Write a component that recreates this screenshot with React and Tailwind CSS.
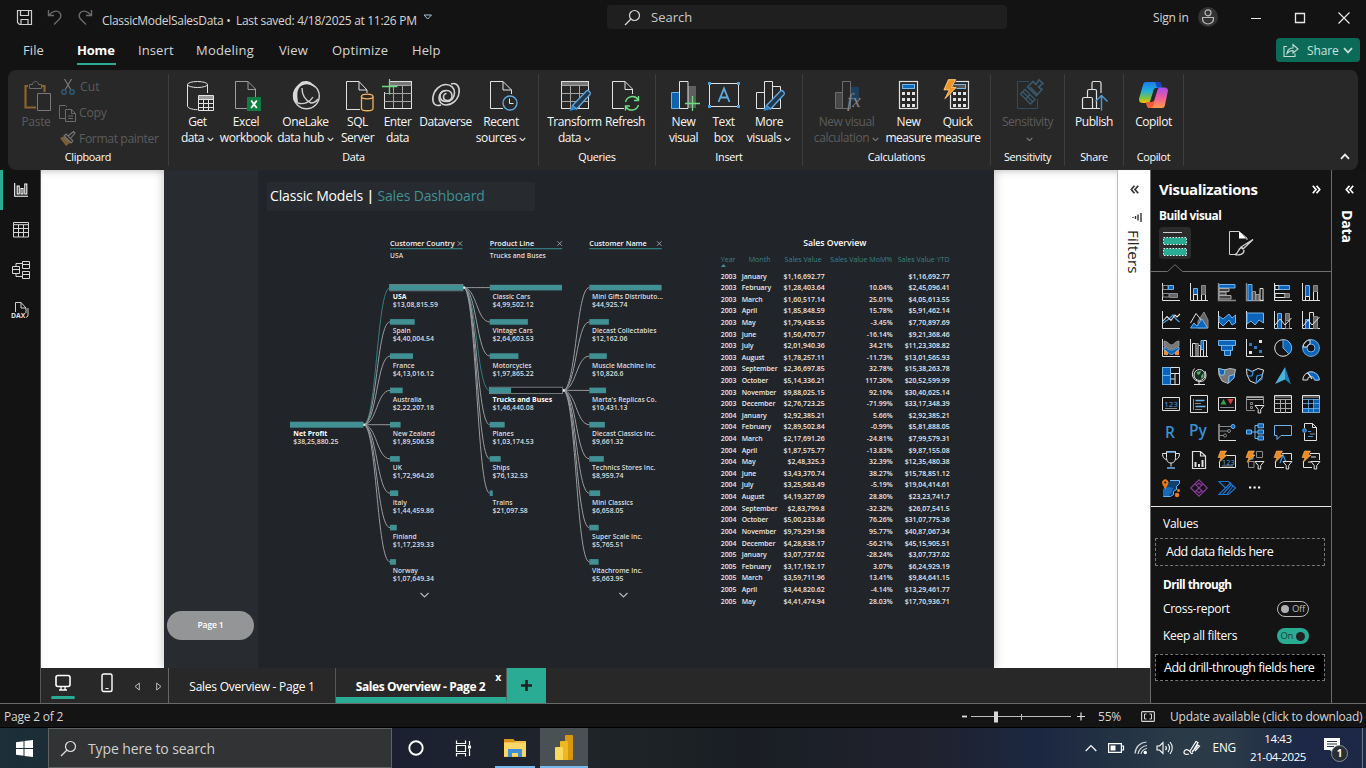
import React from "react";

const W = "#e2e2e2";
const G = "#8a8a8a";
const B = "#0b64b8";
const L = "#6db3ec";
const TEAL = "#2aac94";
const BAR = "#419094";

function Svg({ w = 32, h = w, children, className = "" }) {
  return (
    <svg width={w} height={h} viewBox={`0 0 ${w} ${h}`} fill="none" className={`shrink-0 overflow-visible ${className}`}>
      {children}
    </svg>
  );
}

function Chevron({ color = "#d8d8d8", w = 7, className = "" }) {
  return (
    <svg width={w} height={w * 0.7} viewBox="0 0 10 7" fill="none" className={`inline-block shrink-0 ${className}`}>
      <path d="M1 1.2L5 5.4L9 1.2" stroke={color} strokeWidth="1.7" />
    </svg>
  );
}

/* ---------- ribbon icons, 32 x 32 ---------- */
const GetDataIcon = () => (
  <Svg>
    <path d="M5.500 5.500V27c0 2 4 3.500 10 3.700M25.500 5.500V14" stroke={W} />
    <ellipse cx="15.500" cy="5.500" rx="10" ry="3" stroke={W} />
    <path d="M16.500 16.500h15v15h-15zM16.500 20.500h15M16.500 24.500h15M16.500 28.500h15M21.500 18v13M26.500 18v13" stroke={W} />
    <path d="M17 17h14v3h-14z" fill="#9a9a9a" />
  </Svg>
);
const ExcelIcon = () => (
  <Svg>
    <path d="M17 29.500H5.500V2.500H18L25.500 10V18M18 2.500V10.500H25.500" stroke="#9c9c9c" />
    <path d="M17 18h14v14h-14z" fill="#107c41" />
    <path d="M21.200 21.500L26.800 29M26.800 21.500L21.200 29" stroke="#fff" strokeWidth="1.800" />
  </Svg>
);
const OneLakeIcon = () => (
  <Svg>
    <circle cx="16.500" cy="17" r="12.800" stroke="#d0d0d0" strokeWidth="1.400" />
    <path d="M12 2.500C4 8 1 15 4 22l4 3c0-6-2-11 1-16 4-5 11-5 16 0C22 2 17 1 12 2.500Z" fill="#d8d8d8" />
    <path d="M8 24c6 2 12-1 15-6M12 9c0 7 3 12 9 15 3 0 5-1 7-4" stroke="#d0d0d0" strokeWidth="1.400" />
  </Svg>
);
const SqlIcon = () => (
  <Svg>
    <path d="M18 30.500H4.500V2.500H17L25 11V14M17 2.500V11H25" stroke={W} />
    <path d="M19.500 17.500V29.500c0 3 11.500 3 11.500 0V17.500" stroke="#f2b35e" strokeWidth="1.300" />
    <ellipse cx="25.200" cy="17.500" rx="5.800" ry="2.300" stroke="#f2b35e" strokeWidth="1.300" />
  </Svg>
);
const TableGrid = ({ x = 2.5 }) => (
  <g>
    <rect x={x} y="2.500" width="27" height="27" stroke={W} />
    <rect x={x + 0.5} y="3" width="26" height="3" fill="#777" />
    <path d={`M${x} 6.500h27M${x} 14.500h27M${x} 22.500h27M${x + 9} 7v22M${x + 18} 7v22`} stroke="#a5a5a5" />
  </g>
);
const EnterIcon = () => (
  <Svg>
    <TableGrid x={2.5} />
    <rect x="0" y="0" width="8" height="13" fill="#282828" />
    <path d="M0 7.500H15.500M7.500 0V15.500" stroke="#6fdc83" strokeWidth="1.300" />
  </Svg>
);
const DataverseIcon = () => (
  <Svg>
    <path d="M21 5c6-2 9 3 8 9-1 7-7 12-13 12-4 0-7-3-7-7s3-7.500 7.500-7.500c4 0 5.500 3 5.500 5.500s-2 4.500-4.500 4.500-4-1.500-4-3.500 1.500-3.500 3-3.500" stroke="#d4d4d4" strokeWidth="1.600" />
    <path d="M11 26c-6 2-9-2-8-8 1-7 7-12.500 13-12.500 5 0 8.500 3.500 8.500 8 0 5-3 9-8 9-4 0-6.500-2-6.500-5.500 0-3 2.500-5.500 5.500-5.500" stroke="#d4d4d4" strokeWidth="1.600" />
  </Svg>
);
const RecentIcon = () => (
  <Svg>
    <path d="M18 29.500H5.500V2.500H18L26.500 11V15M18 2.500V11H26.500" stroke={W} />
    <circle cx="25" cy="24" r="7" fill="#282828" stroke="#5da9e0" strokeWidth="1.400" />
    <path d="M24.500 19.500V24.500H28.500" stroke={W} />
  </Svg>
);
const Pencil = () => (
  <g>
    <path d="M13.500 26.500L27.500 12C29 10.500 32.500 13.500 31 15.500L17.500 30Z" fill="#23384a" stroke="#5da9e0" strokeWidth="1.300" />
    <path d="M10.500 32L12.800 26.300L17.300 30.300Z" fill="#2f86cc" />
  </g>
);
const TransformIcon = () => (<Svg><TableGrid x={2.5} /><Pencil /></Svg>);
const RefreshIcon = () => (
  <Svg>
    <path d="M15 29.500H3.500V2.500H16L23.500 10V15M16 2.500V10.500H23.500" stroke={W} />
    <path d="M16.500 23a7 7 0 0 1 12.500-2.500M29.500 26a7 7 0 0 1-12.500 2M29.500 17v4.500h-4.500M16.500 31.500V27h4.500" stroke="#6fdc83" strokeWidth="1.400" />
  </Svg>
);
const NewVisualIcon = () => (
  <Svg>
    <path d="M3.500 13.500h9v16h-9z" fill="#0f62ae" stroke="#6db3ec" />
    <path d="M20 7h8v22h-8z" fill="#5e5e5e" />
    <path d="M11.500 2.500h8.500v27h-8.500z" fill="#282828" stroke={W} />
    <path d="M17 24.500H32M24.500 17V32" stroke="#6fdc83" strokeWidth="1.300" />
  </Svg>
);
const TextBoxIcon = () => (
  <Svg>
    <rect x="1.500" y="4.500" width="29" height="23" stroke={W} />
    <path d="M0 3h3v3H0zM29 3h3v3h-3zM0 26h3v3H0zM29 26h3v3h-3z" fill="#4aa0e6" />
    <path d="M10.500 23L16 9.500L21.500 23M12.500 18.500h7" stroke="#5da9e0" strokeWidth="1.800" />
  </Svg>
);
const MoreVisualsIcon = () => (
  <Svg>
    <path d="M3.500 13.500h8v16h-8zM11.500 2.500h8v27h-8zM19.500 7.500h8v22h-8z" stroke={W} />
    <Pencil />
  </Svg>
);
const NewCalcIcon = () => (
  <Svg>
    <path d="M4.500 13.500h9v16h-9z" fill="#474747" stroke="#6c6c6c" />
    <path d="M19 8h9v14h-9z" fill="#1d405e" />
    <path d="M11.500 2.500h8v27h-8z" fill="#282828" stroke="#6c6c6c" />
    <text x="16" y="28" fontFamily="Liberation Serif" fontStyle="italic" fontSize="19" fill="#858585">fx</text>
  </Svg>
);
const Calculator = ({ top = "#1169bb", x = 7.5 }) => (
  <g>
    <rect x={x} y="2.500" width="18" height="27" stroke={W} strokeWidth="1.200" />
    <rect x={x + 3} y="5.500" width="12" height="4" fill={top} stroke="#7ab8e8" strokeWidth="1" />
    {[13, 19, 25].map((y) => [2.5, 7.5, 12.5].map((d) => <rect key={`${y}-${d}`} x={x + d} y={y} width="3" height="3" fill={W} />))}
  </g>
);
const MeasureIcon = () => (<Svg><Calculator x={6.5} /></Svg>);
const QuickIcon = () => (
  <Svg>
    <Calculator x={8.5} top="#555" />
    <path d="M6 0H14.500L10.500 8H15.500L2 21.500L6.500 11.500H1Z" fill="#e9962a" stroke="#282828" strokeWidth="0.800" />
    <path d="M6.500 0.700H13.500L9.500 8.500H14L3 19.500L7.500 10.800H2Z" fill="none" stroke="#ffc97a" strokeWidth="0.900" />
  </Svg>
);
const SensitivityIcon = () => (
  <Svg>
    <path d="M17 2.500H5.500V29.500H25.500V20" stroke="#2f4c61" />
    <path d="M8.500 15L13 10.500L23 20.500L18.500 25ZM10.700 12.700L20.700 22.700M13.500 20L18 15.500" stroke="#3b5a70" strokeWidth="1.300" />
    <path d="M15.500 8L21 2.500L24 5.500L27 1L31 4.500L26.500 8L30 10.500L24.500 16.500Z" stroke="#3b5a70" strokeWidth="1.600" />
    <path d="M18 8L25 15" stroke="#3b5a70" strokeWidth="1.300" />
  </Svg>
);
const PublishIcon = () => (
  <Svg>
    <path d="M4.500 20c0-1 .500-1.500 1.500-1.500h7c1 0 1.500.500 1.500 1.500v9.500h-10zM9.500 18V12c0-1 .500-1.500 1.500-1.500h6c1 0 1.500.500 1.500 1.500V29.500h-4M14 10.500V4c0-1 .500-1.500 1.500-1.500h6c1 0 1.500.500 1.500 1.500V14M18.500 29.500H22" stroke={W} strokeWidth="1.200" />
    <path d="M23.500 31.500V17M17.500 22.500L23.500 16.500L29.500 22.500" stroke="#4a9fdb" strokeWidth="1.400" />
  </Svg>
);
const CopilotIcon = () => (
  <Svg>
    <defs>
      <linearGradient id="cpa" x1="0" y1="0" x2="0" y2="1"><stop offset="0" stopColor="#1a7df0" /><stop offset=".45" stopColor="#22b1d6" /><stop offset=".75" stopColor="#7bc242" /><stop offset="1" stopColor="#f5c400" /></linearGradient>
      <linearGradient id="cpb" x1="0" y1="0" x2="0" y2="1"><stop offset="0" stopColor="#a64df0" /><stop offset=".5" stopColor="#ef5b9c" /><stop offset="1" stopColor="#ff9a4a" /></linearGradient>
    </defs>
    <path d="M8 3H20C23 3 23 5 24 9H18C16 9 15.500 11 15 13L12.500 21C12 23 11 24 9 24H5C1 24 0.500 21 1.500 18L5 6C5.500 4 6 3 8 3Z" fill="url(#cpa)" />
    <path d="M24 29H12C9 29 9 27 8 23H14C16 23 16.500 21 17 19L19.500 11C20 9 21 8.500 23 8.500H26C30 8.500 30.500 11 29.500 14L27 26C26.500 28 26 29 24 29Z" fill="url(#cpb)" />
    <path d="M17 3h4c2 0 2.500 2 3 5.500h-5c-1-2-1-4-2-5.500Z" fill="#1547b8" />
    <path d="M8 23h6c1.500 0 2-1 2.500-2 0 4-1 8-4.500 8-3 0-3-3-4-6Z" fill="#ee5a3a" />
  </Svg>
);

function RibbonItem({ icon, lines, chevron, w, dim }) {
  return (
    <div className={`flex flex-col items-center ${w} ${dim ? "text-[#5c5c5c]" : "text-[#f6f6f6]"}`}>
      {icon}
      <div className="mt-[3px] flex flex-col items-center whitespace-nowrap text-[12px] leading-4 tracking-[-0.44px]">
        {lines.map((t, i) => (
          <div key={i} className="flex h-4 items-center">
            {t}
            {chevron && i === lines.length - 1 && <Chevron className="ml-[3px] mt-[2px]" color={dim ? "#777" : "#d8d8d8"} />}
          </div>
        ))}
      </div>
    </div>
  );
}

function RibbonGroup({ label, w, pad = "", children }) {
  return (
    <div className={`my-1 flex h-[92px] flex-col border-r border-[#3d3d3d] ${w}`}>
      <div className={`flex h-[76px] pt-[5px] ${pad}`}>{children}</div>
      <div className="text-center text-[10.8px] leading-[14px] tracking-[-0.3px] text-white">{label}</div>
    </div>
  );
}

function TitleBar() {
  return (
    <div className="flex h-[35px] items-center">
      <div className="flex w-[607px] items-center pl-4">
        <Svg w={17}>
          <path d="M1.500 1.500h14v14h-12l-2-2zM4.500 1.500v5h8v-5M5 15.500v-5h7v5" stroke="#d0d0d0" strokeWidth="1.200" />
        </Svg>
        <Svg w={17} className="ml-[14px]">
          <path d="M1.500 1v5.500h5.500M2 6.500C5 2 10 1 12.500 3.500c2.500 3 1 5.500-.500 7L7 15.500" stroke="#6b6b6b" strokeWidth="1.400" />
        </Svg>
        <Svg w={17} className="ml-[13px]">
          <path d="M14.500 1v5.500h-5.500M14 6.500C11 2 6 1 3.500 3.500c-2.500 3-1 5.500.500 7L9 15.500" stroke="#6b6b6b" strokeWidth="1.400" />
        </Svg>
        <div className="ml-2 mt-[6px] whitespace-nowrap text-[12px] tracking-[-0.3px] text-[#d6d6d6]">ClassicModelSalesData&nbsp;•&nbsp; Last saved: 4/18/2025 at 11:26 PM</div>
        <Svg w={10} h={7} className="ml-[6px]"><path d="M1 1h7.500L4.700 5Z" stroke="#a9c3d6" /></Svg>
      </div>
      <div className="mt-[-1px] flex h-6 w-[400px] items-center rounded-sm bg-[#1f1f1f] pl-[17px] text-[13px] text-[#c9c9c9]">
        <Svg w={17}><path d="M1 16L7 10" stroke="#d8d8d8" strokeWidth="1.300" /><circle cx="10.500" cy="6.500" r="5" stroke="#d8d8d8" strokeWidth="1.200" /></Svg>
        <span className="ml-[10px] mt-px">Search</span>
      </div>
      <div className="ml-[146px] mt-px text-[12px] tracking-[-0.2px] text-[#d6d6d6]">Sign in</div>
      <Svg w={20} className="ml-[9px] mt-[-1px]">
        <circle cx="10" cy="10" r="10" fill="#333" />
        <circle cx="10" cy="5.800" r="3" stroke="#b9b9b9" strokeWidth="1.200" />
        <path d="M4.500 10.500h11c.500 4.500-2.500 6.500-5.500 6.500s-6-2-5.500-6.500Z" stroke="#b9b9b9" strokeWidth="1.200" />
      </Svg>
      <Svg w={12} className="ml-8"><path d="M1 6.500h10" stroke="#e8e8e8" /></Svg>
      <Svg w={12} className="ml-8"><path d="M1.500 1.500h9v9h-9z" stroke="#e8e8e8" strokeWidth="1.300" /></Svg>
      <Svg w={12} className="ml-8"><path d="M.500.500l11 11M11.500.500l-11 11" stroke="#e8e8e8" strokeWidth="1.200" /></Svg>
    </div>
  );
}

function MenuBar() {
  return (
    <div className="flex h-[35px] text-[13px] text-[#d6d6d6]">
      <div className="flex w-[1276px] pl-[23px] pt-[6px] leading-[19px] tracking-[0.1px]">
        <div className="w-[54px]">File</div>
        <div className="w-[61px]">
          <span className="inline-block w-[39px] border-b-2 border-[#2aac94] pb-[3px] font-bold tracking-[-0.2px] text-white">Home</span>
        </div>
        <div className="w-[58px]">Insert</div>
        <div className="w-[83px] tracking-[0.2px]">Modeling</div>
        <div className="w-[53px]">View</div>
        <div className="w-20 tracking-[0.2px]">Optimize</div>
        <div>Help</div>
      </div>
      <div className="mt-[3px] flex h-6 w-[84px] items-center rounded bg-[#0c6b58] pl-[7px] text-[12px] text-[#cfe0dc]">
        <Svg w={16} h={15}><path d="M4 3.500H1v10h11v-3M4 10.500C4.500 6.500 7 5 10 5V1.500L15 6L10 10V7.500C7.500 7.500 5.500 8.500 4 10.500Z" stroke="#c5dcd6" strokeWidth="1.100" /></Svg>
        <span className="ml-2 mt-px tracking-[-0.1px]">Share</span>
        <Chevron w={10} color="#c5dcd6" className="ml-1" />
      </div>
    </div>
  );
}

function Ribbon() {
  return (
    <div className="mx-2 flex h-[100px] rounded-lg bg-[#282828]">
      <RibbonGroup label="Clipboard" w="w-[161px]">
        <div className="ml-3 flex w-8 shrink-0 flex-col items-center text-[12px] leading-4 text-[#5c5c5c]">
          <Svg>
            <path d="M8 7H5.500V28.500H16M24.500 13V7h-3" stroke="#8a6430" strokeWidth="2.200" />
            <path d="M9.500 9.500V5.500h3c0-4 6-4 6 0h3v4Z" stroke="#6a6a6a" fill="#282828" />
            <path d="M17.500 14.500h13v17h-13z" stroke="#7a7a7a" fill="#282828" />
          </Svg>
          <span className="mt-[3px] tracking-[-0.3px]">Paste</span>
        </div>
        <div className="-mt-[5px] ml-[7px] flex shrink-0 flex-col leading-4 text-[#5c5c5c]">
          <div className="flex h-[26px] shrink-0 items-center gap-1 text-[12.2px]">
            <Svg w={16} className="ml-px"><path d="M4.500 0L11 11M11.500 0L5 11" stroke="#7b7b7b" strokeWidth="1.200" /><circle cx="4" cy="13" r="2.200" stroke="#2d587a" strokeWidth="1.500" /><circle cx="12" cy="13" r="2.200" stroke="#2d587a" strokeWidth="1.500" /></Svg>Cut
          </div>
          <div className="flex h-[26px] shrink-0 items-center gap-[3px] text-[12.2px] tracking-[-0.2px]">
            <Svg w={17}><path d="M6 13.500H.500V.500h6l1.500 1.500M6.500 4.500h6l4 4v8h-10zM12.500 4.500v4h4M9 11h5M9 13.500h5" stroke="#6b6b6b" /></Svg>Copy
          </div>
          <div className="flex h-[26px] shrink-0 items-center gap-[3px] whitespace-nowrap text-[12.2px] tracking-[-0.4px]">
            <Svg w={17}><path d="M1 7L7 15L12 11L6 5Z" fill="#7a5f3a" /><path d="M5 5L12 12L14 10L7 3ZM9 5L14.500.500L16 2L11.500 7.500" stroke="#777" strokeWidth="1.100" /></Svg>Format painter
          </div>
        </div>
      </RibbonGroup>
      <RibbonGroup label="Data" w="w-[370px]" pad="pl-2">
        <RibbonItem w="w-[41px]" icon={<GetDataIcon />} lines={["Get", "data"]} chevron />
        <RibbonItem w="w-14" icon={<ExcelIcon />} lines={["Excel", "workbook"]} />
        <RibbonItem w="w-[63px]" icon={<OneLakeIcon />} lines={["OneLake", "data hub"]} chevron />
        <RibbonItem w="w-[41px]" icon={<SqlIcon />} lines={["SQL", "Server"]} />
        <RibbonItem w="w-[39px]" icon={<EnterIcon />} lines={["Enter", "data"]} />
        <RibbonItem w="w-[57px]" icon={<DataverseIcon />} lines={["Dataverse"]} />
        <RibbonItem w="w-[54px]" icon={<RecentIcon />} lines={["Recent", "sources"]} chevron />
      </RibbonGroup>
      <RibbonGroup label="Queries" w="w-[117px]" pad="pl-2">
        <RibbonItem w="w-[55px]" icon={<TransformIcon />} lines={["Transform", "data"]} chevron />
        <RibbonItem w="w-[46px]" icon={<RefreshIcon />} lines={["Refresh"]} />
      </RibbonGroup>
      <RibbonGroup label="Insert" w="w-[147px]" pad="pl-[7px]">
        <RibbonItem w="w-[41px]" icon={<NewVisualIcon />} lines={["New", "visual"]} />
        <RibbonItem w="w-[39px]" icon={<TextBoxIcon />} lines={["Text", "box"]} />
        <RibbonItem w="w-[52px]" icon={<MoreVisualsIcon />} lines={["More", "visuals"]} chevron />
      </RibbonGroup>
      <RibbonGroup label="Calculations" w="w-[188px]" pad="pl-[7px]">
        <RibbonItem w="w-[73px]" icon={<NewCalcIcon />} lines={["New visual", "calculation"]} chevron dim />
        <RibbonItem w="w-[51px]" icon={<MeasureIcon />} lines={["New", "measure"]} />
        <RibbonItem w="w-[47px]" icon={<QuickIcon />} lines={["Quick", "measure"]} />
      </RibbonGroup>
      <RibbonGroup label="Sensitivity" w="w-[74px]" pad="justify-center">
        <RibbonItem w="w-14" icon={<SensitivityIcon />} lines={["Sensitivity", ""]} chevron dim />
      </RibbonGroup>
      <RibbonGroup label="Share" w="w-[59px]" pad="justify-center">
        <RibbonItem w="w-14" icon={<PublishIcon />} lines={["Publish"]} />
      </RibbonGroup>
      <RibbonGroup label="Copilot" w="w-[60px]" pad="justify-center">
        <RibbonItem w="w-14" icon={<CopilotIcon />} lines={["Copilot"]} />
      </RibbonGroup>
      <div className="flex flex-1 items-end justify-end pb-[10px] pr-2">
        <Chevron w={10} className="rotate-180" color="#f0f0f0" />
      </div>
    </div>
  );
}

function LeftRail() {
  return (
    <div className="flex w-[41px] shrink-0 flex-col border-r border-[#555]">
      <div className="flex h-10 items-center border-l-[3px] border-[#2aac94] pl-[11px]">
        <Svg w={14}><path d="M.700 0V13.300H14M3.200 3h2v8h-2zM7 5.500h2v5.500H7zM10.800 1h2v10h-2z" stroke="#fff" strokeWidth="1.100" /></Svg>
      </div>
      <div className="flex h-10 items-center pl-[13px]">
        <Svg w={16}><path d="M.500.500h15v14.500H.500zM.500 2.700h15M.500 6.500h15M.500 10.500h15M5.500 3v12M10.500 3v12" stroke="#d8d8d8" /></Svg>
      </div>
      <div className="flex h-10 items-center pl-3">
        <Svg w={18}><path d="M.500 5.500h7v7h-7zM.500 8.500h7M10.500.500h7v7h-7zM10.500 3.500h7M10.500 10.500h7v7h-7zM10.500 13.500h7M4 5.500v-3h6.500M4 12.500v3h6.500" stroke="#d8d8d8" /></Svg>
      </div>
      <div className="flex h-10 items-center pl-[11px]">
        <Svg w={18}>
          <path d="M4.500 11V1.500h5.500l5 5.500v5M10 1.500V7h5M17 7v8l-2 1.500" stroke="#d0d0d0" />
          <text x="0" y="17" fontFamily="Open Sans" fontWeight="700" fontSize="6.800" fill="#e0e0e0">DAX</text>
        </Svg>
      </div>
    </div>
  );
}

/* ---------- report ---------- */
const ROW_Y = [287.6, 321.9, 356.1, 390.4, 424.7, 458.9, 493.2, 527.6, 561.9];
const COUNTRIES = [
  ["USA", "$13,08,815.59", 73], ["Spain", "$4,40,004.54", 24.7], ["France", "$4,13,016.12", 23],
  ["Australia", "$2,22,207.18", 12.7], ["New Zealand", "$1,89,506.58", 10.6], ["UK", "$1,72,964.26", 9.8],
  ["Italy", "$1,44,459.86", 8.2], ["Finland", "$1,17,239.33", 6.8], ["Norway", "$1,07,649.34", 6],
];
const PRODUCTS = [
  ["Classic Cars", "$4,99,502.12", 72.3], ["Vintage Cars", "$2,64,603.53", 38.2], ["Motorcycles", "$1,97,865.22", 28.7],
  ["Trucks and Buses", "$1,46,440.08", 21.3], ["Planes", "$1,03,174.53", 15], ["Ships", "$76,132.53", 11], ["Trains", "$21,097.58", 3.1],
];
const NAMES = [
  ["Mini Gifts Distributo...", "$44,925.74", 72.3], ["Diecast Collectables", "$12,162.06", 19.6], ["Muscle Machine Inc", "$10,826.6", 17.5],
  ["Marta's Replicas Co.", "$10,431.13", 16.8], ["Diecast Classics Inc.", "$9,661.32", 15.6], ["Technics Stores Inc.", "$8,959.74", 14.5],
  ["Mini Classics", "$6,658.05", 10.8], ["Super Scale Inc.", "$5,765.51", 9.4], ["Vitachrome Inc.", "$5,663.95", 9.3],
];

function Branch({ x, items, selected }) {
  return items.map(([name, value, w], i) => {
    const y = ROW_Y[i];
    const sel = i === selected;
    return (
      <g key={name}>
        {sel && <rect x={x - 0.3} y={y - 3.2} width="73.200" height="6.400" fill="#16181c" stroke="#8d9092" strokeWidth="0.800" />}
        <rect x={x} y={y - 2.8} width={w} height="5.600" fill={BAR} />
        <text x={x + 2.8} y={y + 11.4} fontWeight={sel ? 700 : 600} fontSize={sel ? 6.9 : 6.7} fill={sel ? "#fff" : undefined}>{name}</text>
        <text x={x + 2.8} y={y + 19.4}>{value}</text>
      </g>
    );
  });
}

function Links({ x0, y0, x1, n, active }) {
  const xm = (x0 + x1) / 2;
  return (
    <g>
      {ROW_Y.slice(0, n).map((y, i) => (
        <path key={y} d={`M${x0} ${y0}C${xm} ${y0} ${xm} ${y} ${x1} ${y}`} stroke={i === active ? "#357d80" : "#999b9d"} fill="none" />
      ))}
      <circle cx={x0 + 0.5} cy={y0} r="1.300" fill="#e8e8e8" />
    </g>
  );
}

function TreeHead({ x, title, sub }) {
  return (
    <g>
      <text x={x} y="246" fill="#f4f4f4" fontSize="7.300">{title}</text>
      <path d={`M${x + 67.700} 241.300l4.500 4.500m0-4.500l-4.500 4.500`} stroke="#b5b5b5" strokeWidth="0.800" />
      <rect x={x} y="248" width="72.500" height="1.300" fill="#34777a" />
      <text x={x} y="257.800" fontSize="6.700">{sub}</text>
    </g>
  );
}

function DecompositionTree() {
  return (
    <svg width="400" height="380" viewBox="280 231 400 380" fontFamily="Open Sans" fontWeight="600" fontSize="6.900" fill="#dedede" className="ml-[22px] shrink-0">
      <TreeHead x={390} title="Customer Country" sub="USA" />
      <TreeHead x={489.7} title="Product Line" sub="Trucks and Buses" />
      <TreeHead x={589.3} title="Customer Name" sub="" />
      <Links x0={363.5} y0={424.7} x1={390} n={9} active={0} />
      <Links x0={463.5} y0={287.6} x1={489.7} n={7} active={3} />
      <Links x0={563} y0={390.4} x1={589.3} n={9} active={-1} />
      <rect x="290" y="421.700" width="73.500" height="6" fill={BAR} />
      <text x="293.300" y="436" fontWeight="700" fill="#fff">Net Profit</text>
      <text x="293.300" y="444">$38,25,880.25</text>
      <Branch x={390} items={COUNTRIES} selected={0} />
      <Branch x={489.7} items={PRODUCTS} selected={3} />
      <Branch x={589.3} items={NAMES} selected={-1} />
      <path d="M420.500 593l4 4l4-4M619.500 593l4 4l4-4" stroke="#b8b8b8" strokeWidth="1.200" fill="none" />
    </svg>
  );
}

const SALES = `2003|January|$1,16,692.77||$1,16,692.77
2003|February|$1,28,403.64|10.04%|$2,45,096.41
2003|March|$1,60,517.14|25.01%|$4,05,613.55
2003|April|$1,85,848.59|15.78%|$5,91,462.14
2003|May|$1,79,435.55|-3.45%|$7,70,897.69
2003|June|$1,50,470.77|-16.14%|$9,21,368.46
2003|July|$2,01,940.36|34.21%|$11,23,308.82
2003|August|$1,78,257.11|-11.73%|$13,01,565.93
2003|September|$2,36,697.85|32.78%|$15,38,263.78
2003|October|$5,14,336.21|117.30%|$20,52,599.99
2003|November|$9,88,025.15|92.10%|$30,40,625.14
2003|December|$2,76,723.25|-71.99%|$33,17,348.39
2004|January|$2,92,385.21|5.66%|$2,92,385.21
2004|February|$2,89,502.84|-0.99%|$5,81,888.05
2004|March|$2,17,691.26|-24.81%|$7,99,579.31
2004|April|$1,87,575.77|-13.83%|$9,87,155.08
2004|May|$2,48,325.3|32.39%|$12,35,480.38
2004|June|$3,43,370.74|38.27%|$15,78,851.12
2004|July|$3,25,563.49|-5.19%|$19,04,414.61
2004|August|$4,19,327.09|28.80%|$23,23,741.7
2004|September|$2,83,799.8|-32.32%|$26,07,541.5
2004|October|$5,00,233.86|76.26%|$31,07,775.36
2004|November|$9,79,291.98|95.77%|$40,87,067.34
2004|December|$4,28,838.17|-56.21%|$45,15,905.51
2005|January|$3,07,737.02|-28.24%|$3,07,737.02
2005|February|$3,17,192.17|3.07%|$6,24,929.19
2005|March|$3,59,711.96|13.41%|$9,84,641.15
2005|April|$3,44,820.62|-4.14%|$13,29,461.77
2005|May|$4,41,474.94|28.03%|$17,70,936.71`.split("\n").map((r) => r.split("|"));

function SalesTable() {
  return (
    <div className="ml-[40.7px] w-[230px] text-[6.9px] text-[#e9e9e9]">
      <div className="h-6 w-[228px] text-center text-[8.7px] font-semibold leading-6 text-white">Sales Overview</div>
      <div className="grid h-[15.5px] grid-cols-[21px_41px_42px_68px_57px] whitespace-nowrap text-[7.1px] text-[#3a8285]">
        <div className="leading-[9px]">
          Year
          <Svg w={5} h={3} className="block"><path d="M2.500 0L5 3H0Z" fill={BAR} /></Svg>
        </div>
        <div className="pl-[7px] leading-[9px]">Month</div>
        <div className="pr-[3px] text-right leading-[9px]">Sales Value</div>
        <div className="flex justify-end pr-[0.5px] leading-[9px]">Sales Value MoM%</div>
        <div className="text-right leading-[9px]">Sales Value YTD</div>
      </div>
      {SALES.map(([year, month, value, mom, ytd]) => (
        <div key={year + month} className="grid h-[11.61px] grid-cols-[21px_41px_42px_68px_57px] whitespace-nowrap font-semibold leading-[11.6px]">
          <div>{year}</div>
          <div className="tracking-[-0.07px]">{month}</div>
          <div className="text-right">{value}</div>
          <div className="text-right">{mom}</div>
          <div className="text-right">{ytd}</div>
        </div>
      ))}
    </div>
  );
}

function Report() {
  return (
    <div className="flex flex-1 overflow-hidden bg-white pl-[123px] shadow-[inset_0_5px_7px_-4px_rgba(0,0,0,0.25)]">
      <div className="flex w-[830px] shrink-0 bg-[#212429] shadow-[0_0_10px_rgba(0,0,0,0.25)]">
        <div className="flex w-[94px] flex-col justify-end bg-[#282b30] pb-7 pl-[3px]">
          <div className="flex h-[29px] w-[87px] items-center justify-center rounded-full bg-[#949596] text-[8.6px] font-semibold tracking-[-0.2px] text-white">Page 1</div>
        </div>
        <div className="flex flex-1 flex-col">
          <div className="ml-[9px] mt-3 h-[29px] w-[268px] whitespace-nowrap bg-[#272a2f] pl-[3px] text-[14px] leading-[28px] tracking-[-0.15px] text-white">
            Classic Models <span className="font-semibold">|</span> <span className="text-[#419094]">Sales Dashboard</span>
          </div>
          <div className="mt-5 flex">
            <DecompositionTree />
            <SalesTable />
          </div>
        </div>
      </div>
    </div>
  );
}

function DoubleChevron({ color, flip }) {
  return (
    <Svg w={9} className={flip ? "rotate-180" : ""}>
      <path d="M4.500.800L1.300 4.500L4.500 8.200M8.200.800L5 4.500L8.200 8.200" stroke={color} strokeWidth="1.700" />
    </Svg>
  );
}

function FiltersPane() {
  return (
    <div className="flex w-[33px] shrink-0 flex-col items-center border-l border-[#bdbdbd] bg-white pt-[15px]">
      <DoubleChevron color="#333" />
      <Svg w={10} h={12} className="ml-[5px] mt-[18px]"><path d="M9 1v9M6 2.500v6M3.500 4v3M1 5v1" stroke="#333" strokeWidth="1.400" /></Svg>
      <div className="mt-[6px] text-[15.2px] font-medium leading-5 tracking-[0.1px] text-[#252423] [writing-mode:vertical-rl]">Filters</div>
    </div>
  );
}

/* ---------- visual gallery icons, 18 x 18 ---------- */
const Axis = () => <path d="M.500 0V17.500H18" stroke={W} />;
const Bolt = () => <path d="M2.500 0H8.500L6 4H9L1 11.500L3 6.500H0Z" fill="#f08a1d" stroke="#ffd08a" strokeWidth="0.500" />;
const Funnel = () => <path d="M9 10.500h9l-3.300 4v3.500h-2.500v-3.500Z" fill="#141414" stroke={W} />;
const VISUALS = [
  <><Axis /><path d="M1 2.500h5v4H1zM1 10.500h6v3.500H1z" stroke={G} /><path d="M6.500 2.500h5v4h-5z" fill={B} stroke={L} /><path d="M7.500 10.500h8v4h-8z" fill="#666" stroke={G} /></>,
  <><Axis /><path d="M3.500 5.500h4v6h-4z" fill={B} stroke={L} /><path d="M3.500 11.500h4v6h-4zM11.500 11.500h4v6h-4z" stroke={W} /><path d="M11.500 2.500h4v9h-4z" fill="#666" stroke={G} /></>,
  <><path d="M.500 0V17.500H18" stroke={G} strokeWidth="1.400" /><path d="M1 1.500h16v3.500H1z" fill={B} stroke={L} /><path d="M1 5.500h10v3H1zM1 9h7v3H1zM1 12.500h12v3.500H1z" fill="#444" stroke="#aaa" /></>,
  <><path d="M.500 0V17.500H18" stroke={G} strokeWidth="1.400" /><path d="M2 1.500h4v16H2z" fill={B} stroke={L} /><path d="M6.500 8.500h3v9h-3zM10 11.500h3v6h-3z" fill="#555" stroke="#999" /><path d="M14 5.500h3v12h-3z" stroke={W} /></>,
  <><Axis /><path d="M1 2.500h4v4H1zM1 10.500h10v4H1z" stroke={W} /><path d="M5 2.500h10.500v4H5z" fill={B} stroke={L} /><path d="M11 10.500h4.500v4H11z" fill="#666" stroke={G} /></>,
  <><Axis /><path d="M3.500 2.500h4v11h-4z" fill={B} stroke={L} /><path d="M3.500 13.500h4v4h-4zM11.500 8.500h4v9h-4z" stroke={W} /><path d="M11.500 2.500h4v6h-4z" fill="#666" stroke={G} /></>,
  <><Axis /><path d="M1 12L7 8L11 4L14 8L17.500 11" stroke="#49a0e3" strokeWidth="1.200" /><path d="M1 10L5 5.500L9 9.500L13 4L15 6L18 3" stroke={W} strokeWidth="1.100" /></>,
  <><path d="M8 10L14 1L18 9V17H8Z" fill="#666" stroke={G} /><path d="M.500 12L6 2.500L12 10" stroke={W} /><path d="M.500 17L4 12L7 15L12 8L17.500 17Z" fill={B} stroke={L} /></>,
  <><Axis /><path d="M1 5L5 8L11 3L14 7L17.500 4V12L14 14L11 9L5 15L1 11Z" fill={B} stroke={L} /></>,
  <><Axis /><path d="M1 2h16.500v10L13 9L9 14L5 10L1 13Z" fill={B} stroke={L} /></>,
  <><Axis /><path d="M3.500 2.500h4v15h-4z" fill={B} stroke={L} /><path d="M11.500 2.500h4v7h-4z" fill="#666" stroke={G} /><path d="M11.500 9.500h4v8h-4z" stroke={G} /><path d="M1 14L6 8L11 14L17.500 7" stroke={W} /></>,
  <><Axis /><path d="M3.500 8.500h4v9h-4z" fill={B} stroke={L} /><path d="M7.500 1.500h4v16h-4z" stroke={W} /><path d="M11.500 5.500h4v12h-4z" fill="#666" stroke={G} /><path d="M1 15L6 9L10 14L17.500 6" stroke={W} /></>,
  <><Axis /><path d="M2 11h4v5H2zM13 11h4v5h-4z" fill="#ef8b2c" /><path d="M2 2C6 2 7 6 9.500 6S13 2 17 2V7C14 8 12 10 9.500 10S5 8 2 7Z" fill="#777" stroke="#aaa" strokeWidth=".7" /><path d="M2 8C5 9 6 11 9.500 11s4.500-2 7.500-3v3c-3 0-4 4.500-7.500 4.500S5 11 2 11Z" fill={B} stroke="#9fd0f5" strokeWidth=".7" /></>,
  <><Axis /><path d="M2.500 4.500h3.500v13H2.500zM8 6.500h2.500v11H8zM13.500 1.500h3v16h-3z" stroke={W} /><path d="M6 4.500h2.500v5H6z" fill="#666" stroke={G} /><path d="M11 1.500h2.500v9H11z" fill={B} stroke={L} /></>,
  <><path d="M.500 1.500h17v5H.500zM3.500 6.500h11v5h-11zM6.500 11.500h6v5h-6z" fill={B} stroke={L} /></>,
  <><Axis /><path d="M13 1h3v3h-3zM3 12h3v3H3z" fill={W} /><path d="M3 4h3v3H3zM8 7h3v3H8zM13 11h3v3h-3z" fill="#2a7cc9" /></>,
  <><circle cx="9" cy="9" r="8.300" stroke={W} /><path d="M9 .700A8.300 8.300 0 0 1 15 15L9 9Z" fill={B} stroke={L} /></>,
  <><circle cx="9" cy="9" r="6.300" stroke={B} strokeWidth="4" /><circle cx="9" cy="9" r="8.400" stroke={L} /><circle cx="9" cy="9" r="4" stroke={L} /><path d="M1 8A8 8 0 0 1 8 .800V5A4 4 0 0 0 5 8Z" fill="#141414" stroke={W} /></>,
  <><path d="M.500.500h17v17H.500zM8.500 6.500h9M13 6.500v11M8.500 12h4.500" stroke={W} /><path d="M.500.500h8v17h-8z" fill={B} stroke={L} /><path d="M.500 8.500h8" stroke={L} /></>,
  <><circle cx="9.500" cy="8" r="5.500" fill="#1c2b22" stroke={W} /><path d="M6.500 5l4.500-1-1 3-2 1zM11 9l2.500-3v4l-2 2z" fill="#4fb36d" /><path d="M4.500 1.500C0 7 3 14 9.500 14.500S17 9 15 4M9 14.500v3M4 17.500h11" stroke={W} /></>,
  <><path d="M.500 1.500L6 3L12 1.500L17.500 2.500L16 10L10 16.500L4 14L1 8Z" fill="#777" stroke="#bbb" /><path d="M.500 1.500L7 3L6 8L2 8ZM11 9L16.500 7.500L16 11L10.500 16Z" fill={B} stroke="#9fd0f5" strokeWidth=".8" /></>,
  <><path d="M.500 2L6 4.500L12 1.500L17.500 3L16 10L10 16.500L4 14L1 8Z" stroke={W} /><path d="M1 2L7 5L6 9L2 9M11 9L16 7.500V12L10 16Z" stroke="#3a95dd" strokeWidth="1.200" /></>,
  <><path d="M11 0L1 17L11 12.500Z" fill="#4fb4dd" /><path d="M11 0L17 17.500L11 12.500Z" fill="#1b7fb8" /></>,
  <><path d="M.800 13A8.200 8.200 0 0 1 17.200 13H12.500A3.500 3.500 0 0 0 5.500 13Z" fill="#141414" stroke={W} /><path d="M5 6A8.200 8.200 0 0 1 17.200 13H12.500C12 10 11 9.500 9 9.500Z" fill={B} stroke={L} /><path d="M6 6l4 6" stroke={W} strokeWidth="1.300" /></>,
  <><path d="M.500 2.500h17v13H.500z" stroke={W} /><text x="2.200" y="11.500" fontFamily="Open Sans" fontSize="8" fill="#4aa0e6">123</text><path d="M3 13.500h12" stroke={G} /></>,
  <><path d="M.500.500h17v17H.500z" stroke={W} /><path d="M3.500 4v11M5 8.500h6M5 14.500h7" stroke={G} /><path d="M5.500 5.500h9M5.500 11.500h10" stroke={L} strokeWidth="1.500" /></>,
  <><path d="M.500 2.500h17v13H.500z" stroke={W} /><path d="M5.500 4L8.500 9.500H2.500Z" fill="#35a052" /><path d="M12.500 9.500L9.500 4H15.500Z" fill="#e03c3c" /><path d="M2 12.500h14" stroke={G} /></>,
  <><path d="M9 15.500H.500V1.500h17V9" stroke={G} /><path d="M.500 4.500h17M1 2.500h16" stroke="#aaa" /><path d="M4.500 7.500h2v2h-2zM4.500 11.500h2v2h-2z" stroke={G} /><Funnel /></>,
  <><path d="M.500.500h17v17H.500z" stroke={W} /><path d="M1 2h16M.500 4.500h17M.500 8.500h17M.500 13.500h17M6.500 4v14M11.500 4v14" stroke="#a8a8a8" /></>,
  <><path d="M.500.500h17v17H.500z" stroke={W} /><path d="M12 4h5.500v13.500H1V13h11z" fill={B} /><path d="M.500 4.500h17M.500 8.500h17M.500 13.500h17M6.500 4v14M11.500 4v14" stroke={L} strokeWidth=".8" /><path d="M1 2h16" stroke="#a8a8a8" /></>,
  <><text x="3" y="14.700" fontFamily="Open Sans" fontWeight="600" fontSize="15.500" fill="#3a8fd6">R</text></>,
  <><text x="-1" y="13" fontFamily="Open Sans" fontWeight="600" fontSize="15.500" fill="#3a8fd6">Py</text></>,
  <><path d="M1 1v16.500h17" stroke={W} /><path d="M1 3.500h13M1 8h9M1 12.500h5" stroke={G} /><circle cx="15" cy="3.500" r="2" fill={B} stroke={L} /><circle cx="11" cy="8" r="1.500" stroke={G} /><circle cx="7" cy="12.500" r="1.500" stroke={G} /></>,
  <><path d="M6 9h6M9 2.500v13M9 2.500h3M9 15.500h3" stroke={L} /><path d="M.500 7h5v4h-5zM12 .800h5.500v4H12zM12 7h5.500v4H12zM12 13h5.500v4H12z" fill={B} stroke={L} /></>,
  <><path d="M.500 2.500h17v10H7L3 16.500V12.500H.500Z" stroke={L} /></>,
  <><path d="M2.500 5V.500h8l4 4V17.500H2.500V10M10.500.500v4h4" stroke={W} /><circle cx="2.500" cy="7.500" r="1.800" fill={B} stroke={L} /><path d="M6 8.500h3M6 13.500h5" stroke="#3a95dd" /><path d="M8 11h5" stroke={G} /></>,
  <><path d="M4.500.500h9v6c0 4-2 5.500-4.500 5.500S4.500 10.500 4.500 6.500ZM4.500 2.500h-4c0 4 2 6 4.500 6M13.500 2.500h4c0 4-2 6-4.500 6M9 12v3.500" stroke={W} /><path d="M5 17h8M5 1h8" stroke={L} strokeWidth="1.500" /></>,
  <><path d="M2.500.500h8l5 4.500V17.500h-13ZM10.500.500V5h5" stroke={W} strokeWidth="1.200" /><path d="M4.500 11h2v5h-2zM8 13h2v3H8zM11.500 9h2v7h-2z" fill={W} /></>,
  <><path d="M9 4.500h8.500v12H1.500V11" stroke={W} /><text x="4" y="13.500" fontFamily="Open Sans" fontSize="7.500" fill="#4aa0e6">123</text><path d="M4 15h11" stroke={G} /><Bolt /></>,
  <><path d="M10.500.500h6v6h-6zM2.500 10.500h5.500v6H2.500z" stroke={G} /><path d="M7 3v5H3" stroke={L} /><Funnel /><Bolt /></>,
  <><path d="M8 2.500h9.500V9M1.500 10v6.500H10" stroke={W} /><path d="M6 12L9 4L12 11" stroke="#3a95dd" strokeWidth="1.300" /><Funnel /><Bolt /></>,
  <><path d="M8 2.500h9.500V9M1.500 10v6.500H10M9 6h5M6 11h3" stroke={W} /><Funnel /><Bolt /></>,
  <><path d="M8 1.500h9.500v3l-3 3v3l-3 2v3l-3 2H1.500v-7" fill="#0d4273" stroke={L} /><path d="M1 10v7h6l3-4 1-4-5-1z" fill="#1469b8" /><path d="M3.200 10.500L0.600 5.500a3.200 3.200 0 1 1 5.300 0Z" fill="#ee7a10" /><circle cx="3.200" cy="3.500" r="1.100" fill="#141414" /><circle cx="16.500" cy="11.500" r="1.500" fill="#ee7a10" /><circle cx="15" cy="16" r="2.200" fill="#ee7a10" /></>,
  <><path d="M9 .800L17.200 9L9 17.200L.800 9Z" stroke="#8b3a9c" strokeWidth="1.200" /><path d="M5 5l4 4l4-4M9 9l-4 4M9 9l4 4M6.500 6.500L9 4l2.500 2.500M6.500 11.500L9 14l2.500-2.500" stroke="#8b3a9c" strokeWidth="1.100" /></>,
  <><path d="M1 2.500h9.500L17.500 9L10.500 15.500H1L7.500 9ZM7.500 9L13 3.500M5 15l8-9M9 15l6-8" stroke="#1976d2" strokeWidth="1.200" /></>,
  <><path d="M3 7.500h2.200v2H3zM7.500 7.500h2.200v2H7.500zM12 7.500h2.200v2H12z" fill="#fff" /></>,
];

function VisualizationsPane() {
  return (
    <div className="flex w-[182px] shrink-0 flex-col border-x border-[#6a6a6a] bg-[#141414] text-white">
      <div className="flex h-[33px] items-center justify-between pl-2 pr-[10px] pt-[5px]">
        <span className="text-[15px] font-bold tracking-[-0.38px]">Visualizations</span>
        <DoubleChevron color="#fff" flip />
      </div>
      <div className="h-6 pl-2 pt-1 text-[11.8px] font-bold leading-[17px] tracking-[-0.48px]">Build visual</div>
      <div className="flex h-[37px] items-start pl-2">
        <div className="flex size-8 items-center justify-center rounded-sm bg-[#2b2b2b]">
          <Svg w={26}>
            <path d="M1 2.500h19" stroke="#cfcfcf" />
            <path d="M1.500 7.500h23v7h-23zM1.500 18.500h23v7h-23z" fill={TEAL} stroke="#e6e6e6" strokeDasharray="1.500 1.500" />
          </Svg>
        </div>
        <Svg w={26} h={28} className="ml-[37px] mt-[2px]">
          <path d="M8 25.500H1.500V2.500H11L19 9V11" stroke="#d0d0d0" /><path d="M11 2.500V9.500h7.500Z" fill="#fff" />
          <path d="M25 10.500L15 20L13 18ZM14 18.500c-4 0-3 6-7 7 4 1 9 0 9-4Z" stroke="#d0d0d0" strokeWidth="1.300" />
        </Svg>
      </div>
      <svg width="180" height="9" viewBox="0 0 180 9" fill="none" className="shrink-0">
        <path d="M0 7.500H16.500L24 .700L31.500 7.500H180" stroke="#6f6f6f" />
      </svg>
      <div className="grid h-[234px] grid-cols-[repeat(6,18px)] content-start gap-[10px] pl-[11px] pt-[10px]">
        {VISUALS.map((v, i) => <Svg key={i} w={18}>{v}</Svg>)}
      </div>
      <div className="-mt-px h-px bg-[#e6e6e6]" />
      <div className="pl-3 pt-[9px] text-[12px] leading-4 tracking-[-0.25px]">Values</div>
      <div className="ml-1 mr-[6px] mt-[6px] flex h-7 items-center border border-dashed border-[#787878] pl-[10px] text-[12.5px] tracking-[-0.48px]">Add data fields here</div>
      <div className="pl-3 pt-[10px] text-[11.8px] font-bold leading-4 tracking-[-0.55px]">Drill through</div>
      <div className="flex items-center justify-between pl-3 pr-[22px] pt-[9px] text-[12px] leading-4 tracking-[-0.3px]">
        Cross-report
        <span className="flex h-4 w-8 items-center gap-[3px] rounded-full border border-[#b8b8b8] pl-[3px] text-[9.5px] text-[#b8b8b8]">
          <span className="size-2 rounded-full bg-[#b0b0b0]" />Off
        </span>
      </div>
      <div className="flex items-center justify-between pl-3 pr-[22px] pt-[11px] text-[12px] leading-4 tracking-[-0.3px]">
        Keep all filters
        <span className="flex h-4 w-8 items-center justify-end gap-[3px] rounded-full bg-[#2aac94] pr-1 text-[9.5px] text-[#1c3c36]">
          On<span className="size-[9px] rounded-full bg-[#212121]" />
        </span>
      </div>
      <div className="ml-1 mr-[6px] mt-[10px] flex h-[27px] items-center whitespace-nowrap border border-dashed border-[#787878] bg-black pl-2 pt-px text-[12.5px] tracking-[-0.47px]">Add drill-through fields here</div>
    </div>
  );
}

function DataPane() {
  return (
    <div className="flex w-[34px] shrink-0 flex-col items-center bg-[#141414] pt-[15px] text-white">
      <DoubleChevron color="#fff" />
      <div className="mr-[4px] mt-4 text-[14px] font-bold leading-5 tracking-[-0.1px] [writing-mode:vertical-rl]">Data</div>
    </div>
  );
}

function PageTabs() {
  return (
    <div className="flex h-[35px] bg-[#282828] text-[12px] text-white">
      <div className="flex w-32 border-r border-[#666]">
        <div className="flex w-[44px] flex-col items-center pt-[6px]">
          <Svg w={18} h={18}><rect x="2" y="1.500" width="14" height="11" rx="2" stroke="#fff" strokeWidth="1.600" /><path d="M5 16h8M7 13v3M11 13v3" stroke="#fff" strokeWidth="1.300" /></Svg>
          <div className="mt-[4px] h-[3px] w-6 rounded-full bg-[#2aac94]" />
        </div>
        <Svg w={12} h={20} className="ml-4 mt-[5px]"><rect x="1" y="1" width="10" height="17.500" rx="1.800" stroke="#fff" strokeWidth="1.400" /><path d="M4.500 15.500h3" stroke="#fff" /></Svg>
        <Svg w={6} h={9} className="ml-[21px] mt-[14px]"><path d="M5.300 1v7L1 4.500Z" stroke="#bbb" /></Svg>
        <Svg w={6} h={9} className="ml-4 mt-[14px]"><path d="M.700 1v7L5 4.500Z" stroke="#bbb" /></Svg>
      </div>
      <div className="flex w-[167px] items-center justify-center whitespace-nowrap border-r border-[#555] pt-[2px] tracking-[-0.25px]">Sales Overview - Page 1</div>
      <div className="relative flex w-[171px] items-center justify-center whitespace-nowrap border-b-[6px] border-r border-b-[#2aac94] border-r-[#555] pr-px pt-2 font-bold tracking-[-0.42px]">
        Sales Overview - Page 2
        <span className="absolute right-[5px] top-[2px] text-[10.5px] leading-[15px]">x</span>
      </div>
      <div className="flex w-[39px] items-center justify-center bg-[#2aac94]">
        <Svg w={11}><path d="M5.500 0v11M0 5.500h11" stroke="#202020" strokeWidth="2.600" /></Svg>
      </div>
    </div>
  );
}

function StatusBar() {
  return (
    <div className="flex h-[25px] items-center border-b border-t border-b-black border-t-[#6a6a6a] bg-[#141414] pl-1 pt-[2px] text-[12px] tracking-[-0.2px] text-[#d6d6d6]">
      <div className="w-[957px] shrink-0">Page 2 of 2</div>
      <Svg w={125} h={14}>
        <path d="M1 6.500h5" stroke="#e0e0e0" strokeWidth="1.800" />
        <path d="M10 6.500h100M60.500 4v6" stroke="#bdbdbd" />
        <path d="M33 1.500h4v11h-4z" fill="#d8d8d8" />
        <path d="M116 6.500h8M120 2.500v8" stroke="#e0e0e0" strokeWidth="1.200" />
      </Svg>
      <span className="ml-3 w-[43px] shrink-0">55%</span>
      <Svg w={14} h={11}><rect x=".6" y=".6" width="12.800" height="9.800" rx="1" stroke="#d6d6d6" strokeWidth="1.100" /><path d="M5.500 3h-2v5h2M8.500 3h2v5h-2" stroke="#d6d6d6" /></Svg>
      <span className="ml-[15px] shrink-0 whitespace-nowrap tracking-[-0.23px]">Update available (click to download)</span>
    </div>
  );
}

function Taskbar() {
  return (
    <div className="flex h-10 items-center bg-[linear-gradient(90deg,#1b3039_0%,#1d2c36_4%,#1a2030_29%,#1c222e_34%,#1f2528_42%,#1a1e24_55%,#20222e_68%,#1b2741_76%,#2a3a46_86%,#2b3a48_90%,#1c2846_95%,#1c2846_100%)] text-white">
      <div className="flex w-12 justify-center">
        <Svg w={17}><path d="M0 2.300L7.500 1.200V8H0zM8.500 1L17 0V8H8.500zM0 9h7.500v6.800L0 14.700zM8.500 9H17v8l-8.500-1z" fill="#fff" /></Svg>
      </div>
      <div className="flex h-10 w-[344px] items-center border border-[#5d6265] bg-[#323334] pl-[11px] text-[14px] text-[#d0d0d0]">
        <Svg w={17}><path d="M1 16L7 10" stroke="#e0e0e0" strokeWidth="1.300" /><circle cx="10.500" cy="6.500" r="5" stroke="#e0e0e0" strokeWidth="1.200" /></Svg>
        <span className="ml-[11px] tracking-[-0.1px]">Type here to search</span>
      </div>
      <div className="flex w-12 justify-center"><Svg w={16}><circle cx="8" cy="8" r="6.700" stroke="#fff" strokeWidth="1.900" /></Svg></div>
      <div className="flex w-[47px] justify-center">
        <Svg w={17}><path d="M1.500 .500v3h9v-3M1.500 5.500h9v6h-9zM1.500 16.500v-3h9v3M14.500 1v4M14.500 9v7" stroke="#fff" strokeWidth="1.200" /><path d="M13 5.500h3v3h-3z" fill="#fff" /></Svg>
      </div>
      <div className="ml-2 flex h-10 w-10 flex-col items-center justify-between border-b-2 border-[#76b9ed] pt-[10px]">
        <Svg w={22} h={21}>
          <path d="M0 1h9l2 2h11v16H0z" fill="#f3c04a" /><path d="M0 1h9l2 3H0z" fill="#d9941b" /><path d="M0 5h22v13H0z" fill="#fbd76b" />
          <path d="M4 19v-8h14v8h-4v-4H8v4z" fill="#3f8fd8" />
        </Svg>
      </div>
      <div className="ml-[5px] flex h-10 w-12 flex-col items-center border-b-2 border-[#76b9ed] bg-[#4a5155] pt-[7px]">
        <Svg w={20} h={26}>
          <rect x="11" y="0" width="8" height="25" rx="1" fill="#d9970f" /><rect x="6" y="6" width="8" height="19" rx="1" fill="#edb923" /><rect x="1" y="12" width="8" height="13" rx="1" fill="#f8da5c" />
        </Svg>
      </div>
      <div className="flex flex-1 items-center justify-end text-[12px]">
        <Svg w={12} h={8}><path d="M.700 7L6 1.500L11.300 7" stroke="#fff" strokeWidth="1.200" /></Svg>
        <Svg w={16} h={10} className="ml-[11px]"><path d="M.600.600h12.800v8.800H.600zM14 3h1.500v4H14" stroke="#fff" strokeWidth="1.200" /><path d="M2.500 2.500h5v5h-5z" fill="#fff" /></Svg>
        <Svg w={14} className="ml-[10px]"><path d="M1 12.500C1.500 6 6 1.500 12.500 1M4 13c.500-4 4-8 9-8.500M7 13c.500-2.500 3-5 6-5.500" stroke="#d5d9dd" strokeWidth="1.200" /><circle cx="11.300" cy="11.500" r="1.700" fill="#fff" /></Svg>
        <Svg w={17} h={14} className="ml-2"><path d="M1 5h2.500L7 1.500v11L3.500 9H1zM9.500 5c1 1.200 1 3 0 4M12 3c2 2.200 2 6 0 8M14 1c3 3.500 3 8.500 0 12" stroke="#fff" strokeWidth="1.100" /></Svg>
        <Svg w={18} h={16} className="ml-[10px]"><path d="M6 14C-2 16 1 8 5 10s2 5 5 3M7 11L13 1.500l2 1L9.500 12M9 12l6-7 1.500 1L12 11" stroke="#fff" strokeWidth="1.200" /></Svg>
        <span className="ml-3 text-[11.8px] tracking-[-0.2px]">ENG</span>
        <div className="ml-3 w-[60px] text-center text-[11.5px] leading-[18px] tracking-[-0.4px]">14:43<br /><span className="whitespace-nowrap">21-04-2025</span></div>
        <div className="relative ml-4 h-5 w-[38px]">
          <Svg w={17} h={18}><path d="M0 0h16v12h-6v4l-4-4H0z" fill="#fff" /><path d="M3 3.500h10M3 6h10M3 8.500h7" stroke="#2a3447" strokeWidth="1.200" /></Svg>
          <span className="absolute left-[7px] top-[7px] flex size-[17px] items-center justify-center rounded-full border border-[#8a8f96] bg-[#2a2e35] text-[10px] font-bold">1</span>
        </div>
      </div>
      <div className="h-10 w-1 border-l border-[#6f7686]" />
    </div>
  );
}

export default function App() {
  return (
    <div className="flex h-[768px] w-[1366px] flex-col overflow-hidden bg-[#131313] font-['Open_Sans',sans-serif]">
      <TitleBar />
      <MenuBar />
      <Ribbon />
      <div className="flex h-[533px]">
        <LeftRail />
        <div className="flex w-[1109px] shrink-0 flex-col">
          <div className="flex h-[498px]">
            <Report />
            <FiltersPane />
          </div>
          <PageTabs />
        </div>
        <VisualizationsPane />
        <DataPane />
      </div>
      <StatusBar />
      <Taskbar />
    </div>
  );
}
